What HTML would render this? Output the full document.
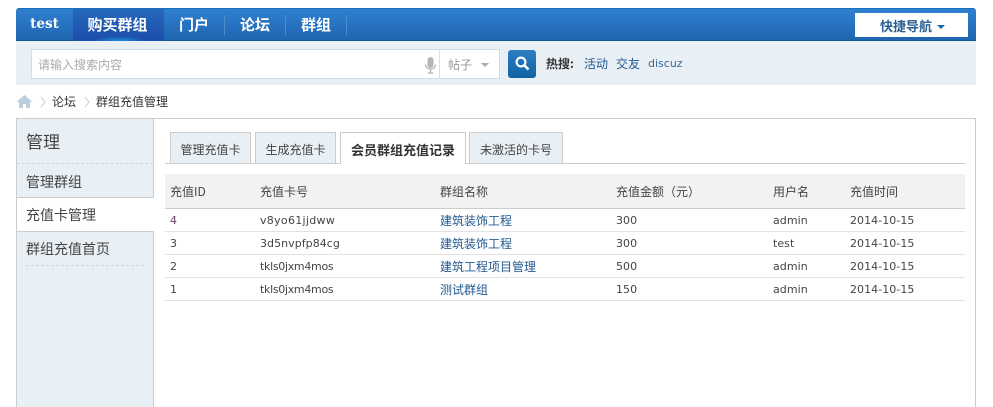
<!DOCTYPE html>
<html lang="zh"><head><meta charset="utf-8"><title>充值记录</title>
<style>
html,body{margin:0;padding:0;background:#fff;width:993px;height:407px;overflow:hidden}
body{position:relative;font:12px "DejaVu Sans","WenQuanYi Zen Hei","Noto Sans CJK SC",sans-serif;color:#444}
#w{position:absolute;left:0;top:0;width:993px;height:407px;overflow:hidden}
.a{position:absolute;white-space:nowrap}
.z{font-family:"WenQuanYi Zen Hei","Noto Sans CJK SC",sans-serif}
.nav{left:16px;top:8px;width:960px;height:33px;background:linear-gradient(#2f80d0,#1f65b0);border-top:1px solid #1c70c0;border-bottom:1px solid #14558f;box-sizing:border-box;border-radius:3px 3px 0 0}
.n{top:8px;height:33px;line-height:34px;color:#fff;font-size:15px;font-weight:bold;text-align:center}
.sep{top:15px;width:1px;height:20px;background:#4d8dcb}
.sub{left:16px;top:41px;width:960px;height:44px;background:#e8eff5}
.t{top:132px;height:31px;line-height:33px;box-sizing:border-box;border:1px solid #ccc;border-bottom:0;background:#e8eff5;text-align:center;color:#444}
.h{top:184px;line-height:16px;color:#444}
.c{line-height:16px;color:#444;font-size:11px;letter-spacing:.05px}
.l{color:#22598f;font-size:12px;letter-spacing:0}
.line{left:165px;width:800px;height:1px;background:#e2e2e2}
</style></head><body><div id="w">
<div class="a nav"></div>
<div class="a" style="left:73px;top:9px;width:91px;height:32px;background:radial-gradient(ellipse 28px 5px at 50% 100%,#1f8de0,transparent),linear-gradient(#2668bb,#1c4dab)"></div>
<div class="a n" style="left:16px;width:57px;font-family:'DejaVu Serif','Liberation Serif',serif;font-size:13.500px;line-height:33px;top:8px">test</div>
<div class="a n z" style="left:72px;width:91px">购买群组</div>
<div class="a n z" style="left:164px;width:60px">门户</div>
<div class="a n z" style="left:225px;width:60px">论坛</div>
<div class="a n z" style="left:286px;width:60px">群组</div>
<div class="a sep" style="left:224px"></div><div class="a sep" style="left:285px"></div><div class="a sep" style="left:346px"></div>
<div class="a z" style="left:855px;top:13px;width:113px;height:24px;background:#fff;text-align:center;line-height:25px;color:#2b5f92;font-weight:bold;font-size:13px;box-sizing:border-box;padding-left:2px">快捷导航 <span style="display:inline-block;width:0;height:0;border:4px solid transparent;border-top:4px solid #1767ac;border-bottom:0;vertical-align:2px;margin-left:2px"></span></div>

<div class="a sub"></div>
<div class="a" style="left:31px;top:49px;width:469px;height:30px;box-sizing:border-box;background:#fff;border:1px solid #d0dce4"></div>
<div class="a" style="left:439px;top:50px;width:1px;height:28px;background:#d8e1e7"></div>
<div class="a z" style="left:38px;top:57px;color:#aaa;line-height:16px">请输入搜索内容</div>
<svg class="a" style="left:424px;top:57px" width="13" height="17" viewBox="0 0 13 17"><rect x="3.500" y="0" width="6" height="11" rx="3" fill="#b5b5b5"/><path d="M1.500 7.500c0 6 10 6 10 0" fill="none" stroke="#b5b5b5" stroke-width="1.200"/><path d="M6.500 12v3M4 16h5" stroke="#b5b5b5" stroke-width="1.400"/></svg>
<div class="a z" style="left:448px;top:57px;color:#999;line-height:16px">帖子</div>
<div class="a" style="left:481px;top:63px;width:0;height:0;border:4px solid transparent;border-top:4px solid #aaa;border-bottom:0"></div>
<div class="a" style="left:508px;top:50px;width:28px;height:28px;border-radius:3px;background:linear-gradient(#2a7fc2,#1263a6)"></div>
<svg class="a" style="left:514px;top:55px" width="17" height="17" viewBox="0 0 17 17"><circle cx="7" cy="7" r="4.400" fill="none" stroke="#fff" stroke-width="2.200"/><path d="M10.500 10.500l4 4" stroke="#fff" stroke-width="2.600"/></svg>
<div class="a z" style="left:546px;top:56px;font-weight:bold;color:#333;line-height:16px">热搜:</div>
<div class="a z" style="left:584px;top:56px;color:#22598f;line-height:16px">活动</div>
<div class="a z" style="left:616px;top:56px;color:#22598f;line-height:16px">交友</div>
<div class="a" style="left:648px;top:56px;color:#3c6a96;line-height:16px;font-size:11px">discuz</div>

<svg class="a" style="left:16px;top:95px" width="17" height="13" viewBox="0 0 17 13"><path d="M8.500 0L0.500 7h2.500v6h4V9h3v4h4V7h2.500z" fill="#b9cfdf"/></svg>
<svg class="a" style="left:40px;top:96px" width="6" height="12" viewBox="0 0 6 12"><path d="M1 1l4 5-4 5" fill="none" stroke="#ccc"/></svg>
<div class="a z" style="left:52px;top:94px;color:#333;line-height:16px">论坛</div>
<svg class="a" style="left:84px;top:96px" width="6" height="12" viewBox="0 0 6 12"><path d="M1 1l4 5-4 5" fill="none" stroke="#ccc"/></svg>
<div class="a z" style="left:96px;top:94px;color:#333;line-height:16px">群组充值管理</div>

<div class="a" style="left:16px;top:118px;width:960px;height:300px;box-sizing:border-box;border:1px solid #ccc;background:#fff"></div>
<div class="a" style="left:17px;top:119px;width:137px;height:288px;box-sizing:border-box;background:#e8eff5;border-right:1px solid #ccc"></div>
<div class="a z" style="left:26px;top:131px;font-size:17px;line-height:20px;color:#444">管理</div>
<div class="a" style="left:17px;top:163px;width:136px;border-top:1px dashed #cdd7df"></div>
<div class="a z" style="left:26px;top:173px;font-size:14px;line-height:18px;color:#444">管理群组</div>
<div class="a" style="left:17px;top:197px;width:137px;height:35px;box-sizing:border-box;background:#fff;border-top:1px solid #ccc;border-bottom:1px solid #ccc"></div>
<div class="a z" style="left:26px;top:206px;font-size:14px;line-height:18px;color:#444">充值卡管理</div>
<div class="a z" style="left:26px;top:240px;font-size:14px;line-height:18px;color:#444">群组充值首页</div>
<div class="a" style="left:26px;top:265px;width:118px;border-top:1px dashed #cdd7df"></div>

<div class="a" style="left:165px;top:163px;width:800px;height:1px;background:#ccc"></div>
<div class="a t z" style="left:170px;width:81px">管理充值卡</div>
<div class="a t z" style="left:255px;width:81px">生成充值卡</div>
<div class="a t z" style="left:340px;width:126px;height:32px;background:#fff;font-weight:bold;color:#333;font-size:13px">会员群组充值记录</div>
<div class="a t z" style="left:469px;width:94px">未激活的卡号</div>

<div class="a" style="left:165px;top:174px;width:800px;height:34px;background:#f2f2f2"></div>
<div class="a" style="left:165px;top:208px;width:800px;height:1px;background:#ccc"></div>
<div class="a line" style="top:231px"></div><div class="a line" style="top:254px"></div><div class="a line" style="top:277px"></div><div class="a line" style="top:300px"></div>

<div class="a h z" style="left:170px">充值ID</div>
<div class="a h z" style="left:260px">充值卡号</div>
<div class="a h z" style="left:440px">群组名称</div>
<div class="a h z" style="left:616px">充值金额（元）</div>
<div class="a h z" style="left:773px">用户名</div>
<div class="a h z" style="left:850px">充值时间</div>

<div class="a c" style="left:170px;top:213px;color:#6b3d6b">4</div>
<div class="a c" style="left:260px;top:213px;letter-spacing:.3px">v8yo61jjdww</div>
<div class="a c l z" style="left:440px;top:213px">建筑装饰工程</div>
<div class="a c" style="left:616px;top:213px">300</div>
<div class="a c" style="left:773px;top:213px">admin</div>
<div class="a c" style="left:850px;top:213px">2014-10-15</div>

<div class="a c" style="left:170px;top:236px">3</div>
<div class="a c" style="left:260px;top:236px">3d5nvpfp84cg</div>
<div class="a c l z" style="left:440px;top:236px">建筑装饰工程</div>
<div class="a c" style="left:616px;top:236px">300</div>
<div class="a c" style="left:773px;top:236px">test</div>
<div class="a c" style="left:850px;top:236px">2014-10-15</div>

<div class="a c" style="left:170px;top:259px">2</div>
<div class="a c" style="left:260px;top:259px;letter-spacing:-.3px">tkls0jxm4mos</div>
<div class="a c l z" style="left:440px;top:259px">建筑工程项目管理</div>
<div class="a c" style="left:616px;top:259px">500</div>
<div class="a c" style="left:773px;top:259px">admin</div>
<div class="a c" style="left:850px;top:259px">2014-10-15</div>

<div class="a c" style="left:170px;top:282px">1</div>
<div class="a c" style="left:260px;top:282px;letter-spacing:-.3px">tkls0jxm4mos</div>
<div class="a c l z" style="left:440px;top:282px">测试群组</div>
<div class="a c" style="left:616px;top:282px">150</div>
<div class="a c" style="left:773px;top:282px">admin</div>
<div class="a c" style="left:850px;top:282px">2014-10-15</div>
</div></body></html>
